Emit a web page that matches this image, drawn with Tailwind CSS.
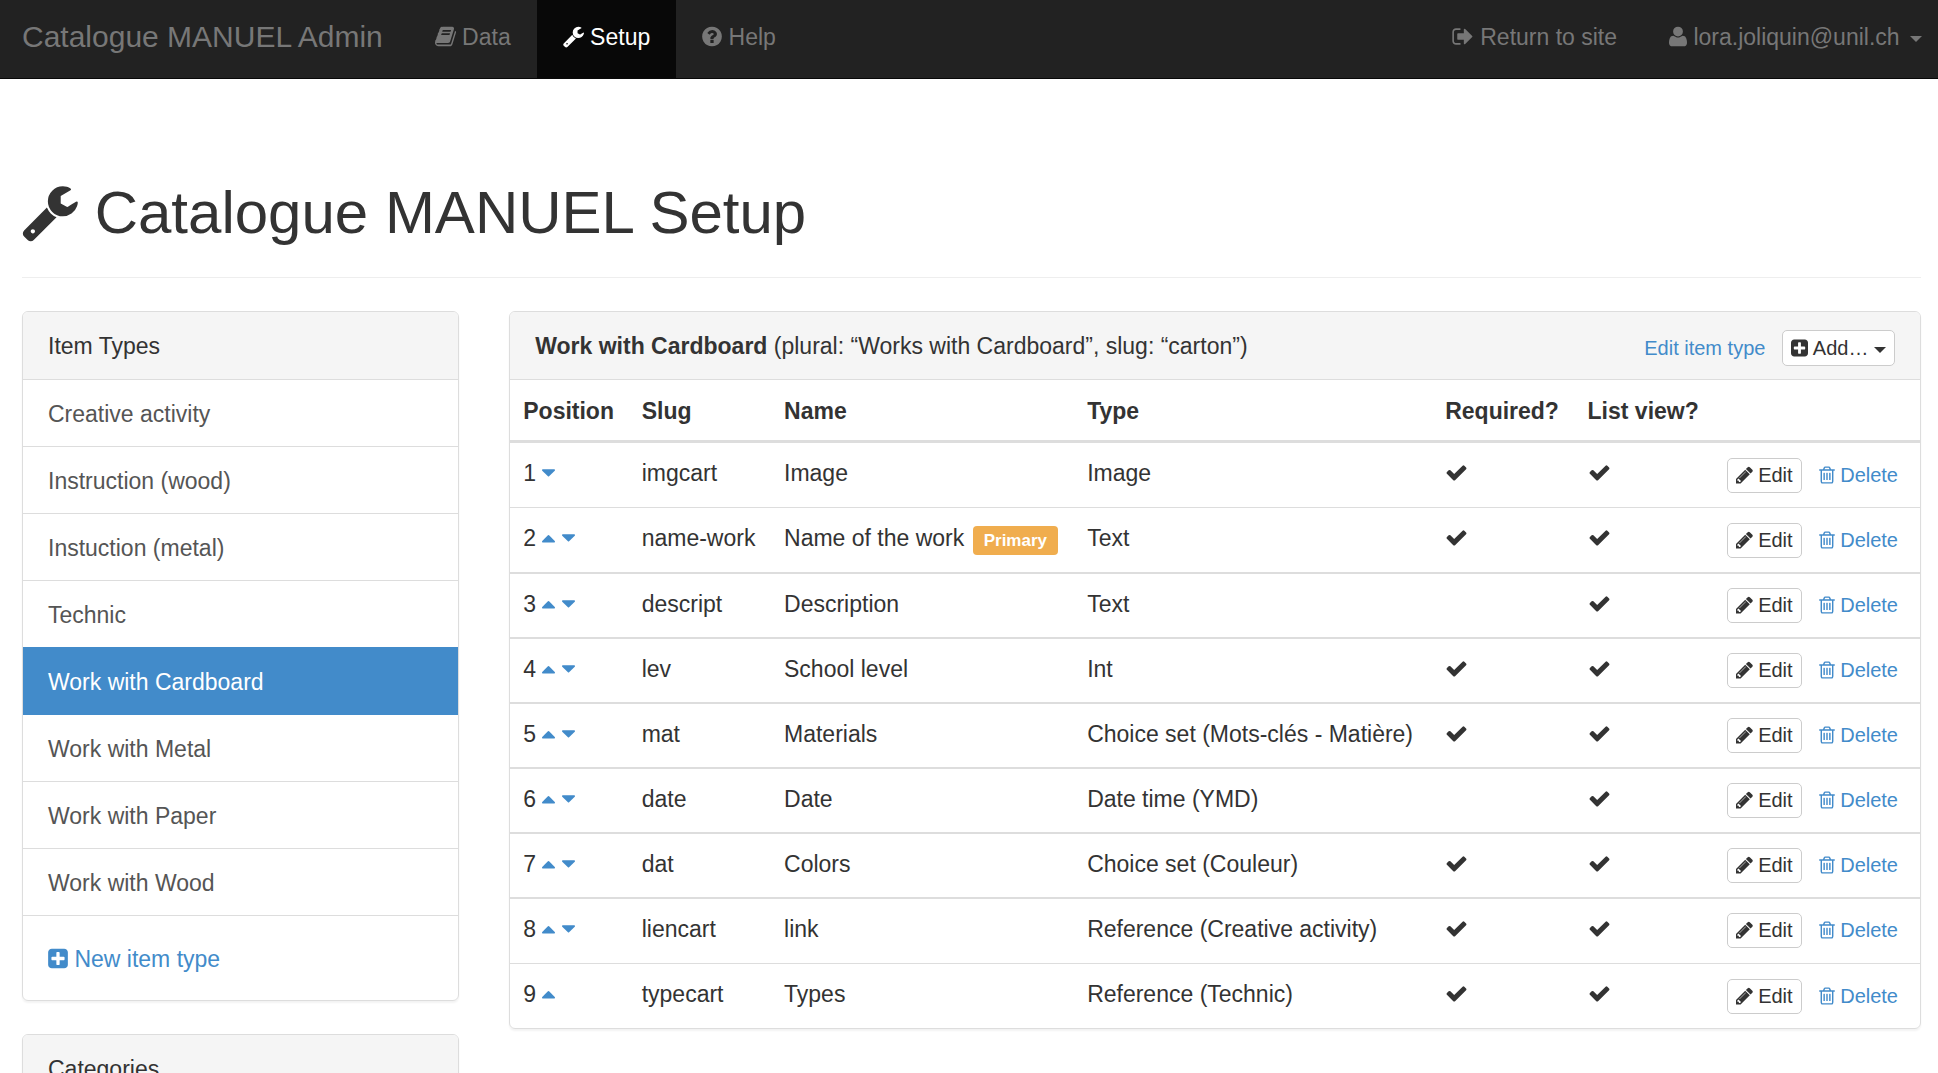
<!DOCTYPE html>
<html lang="en">
<head>
<meta charset="utf-8">
<meta name="viewport" content="width=device-width, initial-scale=1">
<title>Catalogue MANUEL Setup</title>
<script src="https://cdn.jsdelivr.net/npm/@tailwindcss/browser@4"></script>
</head>
<body class="bg-white font-['Liberation_Sans',Arial,sans-serif] text-[23px] leading-[33px] text-[#333]">

<!-- Icon set -->
<svg class="hidden" aria-hidden="true">
  <symbol id="wrench" viewBox="64 0 1664 1792"><path d="M448 1472q0-26-19-45t-45-19-45 19-19 45 19 45 45 19 45-19 19-45zm644-420l-682 682q-37 37-90 37-52 0-91-37l-106-108q-38-36-38-90 0-53 38-91l681-681q39 98 114.5 173.5t173.5 114.5zm634-435q0 39-23 106-47 134-164.5 217.5t-258.5 83.5q-185 0-316.5-131.5t-131.5-316.5 131.5-316.5 316.5-131.5q58 0 121.5 16.5t107.5 46.5q16 11 16 28t-16 28l-293 169v224l193 107q5-3 79-48.5t135.5-81 70.5-35.5q15 0 23.5 10t8.5 25z"/></symbol>
  <symbol id="book" viewBox="64 0 1664 1792"><path d="M1703 478q40 57 18 129l-275 906q-19 64-76.5 107.5t-122.5 43.5h-923q-77 0-148.5-53.5t-99.5-131.5q-24-67-2-127 0-4 3-27t4-37q1-8-3-21.5t-3-19.5q2-11 8-21t16.5-23.5 16.5-23.5q23-38 45-91.5t30-91.5q3-10 .5-30t-.5-28q3-11 17-28t17-23q21-36 42-92t25-90q1-9-2.5-32t.5-28q4-13 22-30.5t22-22.5q19-26 42.5-84.5t27.5-96.5q1-8-3-25.5t-2-26.5q2-8 9-18t18-23 17-21q8-12 16.5-30.5t15-35 16-36 19.5-32 26.5-23.5 36-11.5 47.5 5.5l-1 3q38-9 51-9h761q74 0 114 56t18 130l-274 906q-36 119-71.5 153.5t-128.5 34.5h-869q-27 0-38 15-11 16-1 43 24 70 144 70h923q29 0 56-15.5t35-41.5l300-987q7-22 5-57 38 15 59 43zm-1064 2q-4 13 2 22.5t20 9.5h608q13 0 25.5-9.5t16.5-22.5l21-64q4-13-2-22.5t-20-9.5h-608q-13 0-25.5 9.5t-16.5 22.5zm-83 256q-4 13 2 22.5t20 9.5h608q13 0 25.5-9.5t16.5-22.5l21-64q4-13-2-22.5t-20-9.5h-608q-13 0-25.5 9.5t-16.5 22.5z"/></symbol>
  <symbol id="question" viewBox="128 0 1536 1792"><path d="M1024 1376v-192q0-14-9-23t-23-9h-192q-14 0-23 9t-9 23v192q0 14 9 23t23 9h192q14 0 23-9t9-23zm256-672q0-88-55.5-163t-138.5-116-170-41q-243 0-371 213-15 24 8 42l132 100q7 6 19 6 16 0 25-12 53-68 86-92 34-24 86-24 48 0 85.5 26t37.5 59q0 38-20 61t-68 45q-63 28-115.5 86.5t-52.5 125.5v36q0 14 9 23t23 9h192q14 0 23-9t9-23q0-19 21.5-49.5t54.5-49.5q32-18 49-28.5t46-35 44.5-48 28-60.5 12.5-81zm384 192q0 209-103 385.5t-279.5 279.5-385.5 103-385.5-103-279.5-279.5-103-385.5 103-385.5 279.5-279.5 385.5-103 385.5 103 279.5 279.5 103 385.5z"/></symbol>
  <symbol id="sign-out" viewBox="64 0 1664 1792"><path d="M704 1440q0 4 1 20t.5 26.5-3 23.5-10 19.5-20.5 6.5h-320q-119 0-203.5-84.5t-84.5-203.5v-704q0-119 84.5-203.5t203.5-84.5h320q13 0 22.5 9.5t9.5 22.5q0 4 1 20t.5 26.5-3 23.5-10 19.5-20.5 6.5h-320q-66 0-113 47t-47 113v704q0 66 47 113t113 47h312l11.5 1 11.5 3 8 5.5 7 9 2 13.5zm928-544q0 26-19 45l-544 544q-19 19-45 19t-45-19-19-45v-288h-448q-26 0-45-19t-19-45v-384q0-26 19-45t45-19h448v-288q0-26 19-45t45-19 45 19l544 544q19 19 19 45z"/></symbol>
  <symbol id="user" viewBox="192 0 1408 1792"><path d="M1600 1405q0 120-73 189.5t-194 69.5h-874q-121 0-194-69.5t-73-189.5q0-53 3.5-103.5t14-109 26.5-108.5 43-97.5 62-81 85.5-53.5 111.5-20q9 0 42 21.5t74.5 48 108 48 133.5 21.5 133.5-21.5 108-48 74.5-48 42-21.5q61 0 111.5 20t85.5 53.5 62 81 43 97.5 26.5 108.5 14 109 3.5 103.5zm-320-893q0 159-112.5 271.5t-271.5 112.5-271.5-112.5-112.5-271.5 112.5-271.5 271.5-112.5 271.5 112.5 112.5 271.5z"/></symbol>
  <symbol id="plus" viewBox="128 0 1536 1792"><path d="M1408 960v-128q0-26-19-45t-45-19h-320v-320q0-26-19-45t-45-19h-128q-26 0-45 19t-19 45v320h-320q-26 0-45 19t-19 45v128q0 26 19 45t45 19h320v320q0 26 19 45t45 19h128q26 0 45-19t19-45v-320h320q26 0 45-19t19-45zm256-544v960q0 119-84.5 203.5t-203.5 84.5h-960q-119 0-203.5-84.5t-84.5-203.5v-960q0-119 84.5-203.5t203.5-84.5h960q119 0 203.5 84.5t84.5 203.5z"/></symbol>
  <symbol id="check" viewBox="0 0 1792 1792"><path d="M1671 566q0 40-28 68l-724 724-136 136q-28 28-68 28t-68-28l-136-136-362-362q-28-28-28-68t28-68l136-136q28-28 68-28t68 28l294 295 656-657q28-28 68-28t68 28l136 136q28 28 28 68z"/></symbol>
  <symbol id="pencil" viewBox="128 0 1536 1792"><path d="M491 1536l91-91-235-235-91 91v107h128v128h107zm523-928q0-22-22-22-10 0-17 7l-542 542q-7 7-7 17 0 22 22 22 10 0 17-7l542-542q7-7 7-17zm-54-192l416 416-832 832h-416v-416zm683 96q0 53-37 90l-166 166-416-416 166-165q36-38 90-38 53 0 91 38l235 234q37 39 37 91z"/></symbol>
  <symbol id="trash" viewBox="192 0 1408 1792"><path d="M704 736v576q0 14-9 23t-23 9h-64q-14 0-23-9t-9-23v-576q0-14 9-23t23-9h64q14 0 23 9t9 23zm256 0v576q0 14-9 23t-23 9h-64q-14 0-23-9t-9-23v-576q0-14 9-23t23-9h64q14 0 23 9t9 23zm256 0v576q0 14-9 23t-23 9h-64q-14 0-23-9t-9-23v-576q0-14 9-23t23-9h64q14 0 23 9t9 23zm128 724v-948h-896v948q0 22 7 40.5t14.5 27 10.5 8.5h832q3 0 10.5-8.5t14.5-27 7-40.5zm-672-1076h448l-48-117q-7-9-17-11h-317q-10 2-17 11zm928 32v64q0 14-9 23t-23 9h-96v948q0 83-47 143.5t-113 60.5h-832q-66 0-113-58.5t-47-141.5v-952h-96q-14 0-23-9t-9-23v-64q0-14 9-23t23-9h309l70-167q15-37 54-63t79-26h320q40 0 79 26t54 63l70 167h309q14 0 23 9t9 23z"/></symbol>
  <symbol id="down" viewBox="384 0 1024 1792"><path d="M1408 704q0 26-19 45l-448 448q-19 19-45 19t-45-19l-448-448q-19-19-19-45t19-45 45-19h896q26 0 45 19t19 45z"/></symbol>
  <symbol id="up" viewBox="384 0 1024 1792"><path d="M1408 1216q0 26-19 45t-45 19h-896q-26 0-45-19t-19-45 19-45l448-448q19-19 45-19t45 19l448 448q19 19 19 45z"/></symbol>
  <symbol id="caret" viewBox="0 0 12 6"><path d="M0 0h12l-6 6z"/></symbol>
</svg>

<nav class="flex justify-between whitespace-nowrap border-b border-[#080808] bg-[#222] pr-4 pl-[22px] text-[#777] [&_svg]:inline [&_svg]:fill-current">
  <div class="flex">
    <a href="#" class="pt-5 pr-[26px] pb-[25px] text-[30px]">Catalogue MANUEL Admin</a>
    <a href="#" class="px-[26px] pt-[21px] pb-6"><svg class="h-[23px] w-[21px] align-[-3px]"><use href="#book"/></svg> Data</a>
    <a href="#" class="bg-[#080808] px-[26px] pt-[21px] pb-6 text-white"><svg class="h-[23px] w-[21px] align-[-3px]"><use href="#wrench"/></svg> Setup</a>
    <a href="#" class="px-[26px] pt-[21px] pb-6"><svg class="h-[23px] w-[20px] align-[-3px]"><use href="#question"/></svg> Help</a>
  </div>
  <div class="flex">
    <a href="#" class="px-[26px] pt-[21px] pb-6"><svg class="h-[23px] w-[22px] align-[-3px]"><use href="#sign-out"/></svg> Return to site</a>
    <a href="#" class="pt-[21px] pb-6 pl-[26px]"><svg class="h-[23px] w-[18px] align-[-3px]"><use href="#user"/></svg> lora.joliquin@unil.ch <svg class="ml-1 h-[6px] w-[12px] align-[3px]"><use href="#caret"/></svg></a>
  </div>
</nav>

<main class="pt-[101px] pr-[17px] pl-[22px]">
  <h1 class="mb-[33px] border-b border-[#eee] pb-[31px] text-[60px] leading-[66px]"><svg class="inline h-[60px] w-[56px] fill-current align-[-9px]"><use href="#wrench"/></svg> Catalogue MANUEL Setup</h1>

  <div class="grid grid-cols-12 items-start gap-x-[50px]">
    <aside class="col-span-3 flex flex-col gap-[33px]">
      <section class="rounded-md border border-[#ddd] shadow-[0_2px_2px_rgba(0,0,0,0.05)]">
        <h2 class="rounded-t-[5px] border-b border-[#ddd] bg-[#f5f5f5] px-[25px] pt-[18px] pb-4">Item Types</h2>
        <nav class="flex flex-col text-[#555]">
          <a href="#" class="border-b border-[#ddd] px-[25px] pt-[17px] pb-[15px] leading-[34px]">Creative activity</a>
          <a href="#" class="border-b border-[#ddd] px-[25px] pt-[17px] pb-[15px] leading-[34px]">Instruction (wood)</a>
          <a href="#" class="border-b border-[#ddd] px-[25px] pt-[17px] pb-[15px] leading-[34px]">Instuction (metal)</a>
          <a href="#" class="border-b border-[#428bca] px-[25px] pt-[17px] pb-[15px] leading-[34px]">Technic</a>
          <a href="#" class="border-b border-[#428bca] bg-[#428bca] px-[25px] pt-[17px] pb-[15px] leading-[34px] text-white">Work with Cardboard</a>
          <a href="#" class="border-b border-[#ddd] px-[25px] pt-[17px] pb-[15px] leading-[34px]">Work with Metal</a>
          <a href="#" class="border-b border-[#ddd] px-[25px] pt-[17px] pb-[15px] leading-[34px]">Work with Paper</a>
          <a href="#" class="border-b border-[#ddd] px-[25px] pt-[17px] pb-[15px] leading-[34px]">Work with Wood</a>
        </nav>
        <div class="px-[25px] pt-[26px] pb-6 leading-[34px]"><a href="#" class="text-[#428bca]"><svg class="inline h-[23px] w-[20px] fill-current align-[-3px]"><use href="#plus"/></svg> New item type</a></div>
      </section>
      <section class="rounded-md border border-[#ddd] shadow-[0_2px_2px_rgba(0,0,0,0.05)]">
        <h2 class="rounded-t-[5px] bg-[#f5f5f5] px-[25px] pt-[18px] pb-4">Categories</h2>
      </section>
    </aside>

    <section class="col-span-9 rounded-md border border-[#ddd] shadow-[0_2px_2px_rgba(0,0,0,0.05)]">
      <header class="flex items-start justify-between rounded-t-[5px] border-b border-[#ddd] bg-[#f5f5f5] px-[25px]">
        <h2 class="pt-[18px] pb-4"><strong>Work with Cardboard</strong> (plural: “Works with Cardboard”, slug: “carton”)</h2>
        <div class="flex gap-2 pt-[18px] text-[20px] leading-[30px]">
          <a href="#" class="border border-transparent px-2 py-[2px] text-[#428bca]">Edit item type</a>
          <button type="button" class="rounded-[5px] border border-[#ccc] bg-white px-2 py-[2px]"><svg class="inline h-[20px] w-[17px] fill-current align-[-3px]"><use href="#plus"/></svg> Add… <svg class="inline h-[6px] w-[12px] fill-current align-[2px]"><use href="#caret"/></svg></button>
        </div>
      </header>

      <table class="w-full table-fixed border-separate border-spacing-0 whitespace-nowrap text-left [&_svg]:inline [&_svg]:fill-current [&_td]:h-[65px] [&_td]:border-[#ddd] [&_td]:px-[13px] [&_td]:pt-[14px] [&_td]:align-top [&_th]:h-[63px] [&_th]:border-b-3 [&_th]:border-[#ddd] [&_th]:px-[13px] [&_th]:pt-[15px] [&_th]:align-top">
        <thead>
          <tr>
            <th scope="col" class="w-[8.4%]">Position</th>
            <th scope="col" class="w-[10.1%]">Slug</th>
            <th scope="col" class="w-[21.5%]">Name</th>
            <th scope="col" class="w-[25.4%]">Type</th>
            <th scope="col" class="w-[10.1%]">Required?</th>
            <th scope="col" class="w-[9.9%]">List view?</th>
            <th scope="col" aria-label="Actions"></th>
          </tr>
        </thead>
        <tbody>
          <tr class="[&>td]:h-[64px]!">
            <td>1 <a href="#" aria-label="Move down" class="text-[#428bca]"><svg class="h-[23px] w-[13px] align-[-3px]"><use href="#down"/></svg></a></td>
            <td>imgcart</td><td>Image</td><td>Image</td>
            <td><svg class="size-[23px] align-[-3px]" role="img" aria-label="Yes"><use href="#check"/></svg></td>
            <td><svg class="size-[23px] align-[-3px]" role="img" aria-label="Yes"><use href="#check"/></svg></td>
            <td><div class="mt-px flex justify-end gap-2 text-[20px] leading-[29px]"><button type="button" class="rounded-[5px] border border-[#ccc] bg-white px-2 py-[2px]"><svg class="h-[20px] w-[17px] align-[-3px]"><use href="#pencil"/></svg> Edit</button><a href="#" class="border border-transparent px-2 py-[2px] text-[#428bca]"><svg class="h-[20px] w-[16px] align-[-3px]"><use href="#trash"/></svg> Delete</a></div></td>
          </tr>
          <tr class="[&>td]:border-t">
            <td>2 <a href="#" aria-label="Move up" class="text-[#428bca]"><svg class="h-[23px] w-[13px] align-[-3px]"><use href="#up"/></svg></a> <a href="#" aria-label="Move down" class="text-[#428bca]"><svg class="h-[23px] w-[13px] align-[-3px]"><use href="#down"/></svg></a></td>
            <td>name-work</td><td>Name of the work <span class="ml-[2px] inline-block rounded-[4px] bg-[#f0ad4e] px-[11px] text-[17px] leading-[29px] font-bold text-white">Primary</span></td><td>Text</td>
            <td><svg class="size-[23px] align-[-3px]" role="img" aria-label="Yes"><use href="#check"/></svg></td>
            <td><svg class="size-[23px] align-[-3px]" role="img" aria-label="Yes"><use href="#check"/></svg></td>
            <td><div class="mt-px flex justify-end gap-2 text-[20px] leading-[29px]"><button type="button" class="rounded-[5px] border border-[#ccc] bg-white px-2 py-[2px]"><svg class="h-[20px] w-[17px] align-[-3px]"><use href="#pencil"/></svg> Edit</button><a href="#" class="border border-transparent px-2 py-[2px] text-[#428bca]"><svg class="h-[20px] w-[16px] align-[-3px]"><use href="#trash"/></svg> Delete</a></div></td>
          </tr>
          <tr class="[&>td]:border-t-2">
            <td>3 <a href="#" aria-label="Move up" class="text-[#428bca]"><svg class="h-[23px] w-[13px] align-[-3px]"><use href="#up"/></svg></a> <a href="#" aria-label="Move down" class="text-[#428bca]"><svg class="h-[23px] w-[13px] align-[-3px]"><use href="#down"/></svg></a></td>
            <td>descript</td><td>Description</td><td>Text</td>
            <td></td>
            <td><svg class="size-[23px] align-[-3px]" role="img" aria-label="Yes"><use href="#check"/></svg></td>
            <td><div class="flex justify-end gap-2 text-[20px] leading-[29px]"><button type="button" class="rounded-[5px] border border-[#ccc] bg-white px-2 py-[2px]"><svg class="h-[20px] w-[17px] align-[-3px]"><use href="#pencil"/></svg> Edit</button><a href="#" class="border border-transparent px-2 py-[2px] text-[#428bca]"><svg class="h-[20px] w-[16px] align-[-3px]"><use href="#trash"/></svg> Delete</a></div></td>
          </tr>
          <tr class="[&>td]:border-t-2">
            <td>4 <a href="#" aria-label="Move up" class="text-[#428bca]"><svg class="h-[23px] w-[13px] align-[-3px]"><use href="#up"/></svg></a> <a href="#" aria-label="Move down" class="text-[#428bca]"><svg class="h-[23px] w-[13px] align-[-3px]"><use href="#down"/></svg></a></td>
            <td>lev</td><td>School level</td><td>Int</td>
            <td><svg class="size-[23px] align-[-3px]" role="img" aria-label="Yes"><use href="#check"/></svg></td>
            <td><svg class="size-[23px] align-[-3px]" role="img" aria-label="Yes"><use href="#check"/></svg></td>
            <td><div class="flex justify-end gap-2 text-[20px] leading-[29px]"><button type="button" class="rounded-[5px] border border-[#ccc] bg-white px-2 py-[2px]"><svg class="h-[20px] w-[17px] align-[-3px]"><use href="#pencil"/></svg> Edit</button><a href="#" class="border border-transparent px-2 py-[2px] text-[#428bca]"><svg class="h-[20px] w-[16px] align-[-3px]"><use href="#trash"/></svg> Delete</a></div></td>
          </tr>
          <tr class="[&>td]:border-t-2">
            <td>5 <a href="#" aria-label="Move up" class="text-[#428bca]"><svg class="h-[23px] w-[13px] align-[-3px]"><use href="#up"/></svg></a> <a href="#" aria-label="Move down" class="text-[#428bca]"><svg class="h-[23px] w-[13px] align-[-3px]"><use href="#down"/></svg></a></td>
            <td>mat</td><td>Materials</td><td>Choice set (Mots-clés - Matière)</td>
            <td><svg class="size-[23px] align-[-3px]" role="img" aria-label="Yes"><use href="#check"/></svg></td>
            <td><svg class="size-[23px] align-[-3px]" role="img" aria-label="Yes"><use href="#check"/></svg></td>
            <td><div class="flex justify-end gap-2 text-[20px] leading-[29px]"><button type="button" class="rounded-[5px] border border-[#ccc] bg-white px-2 py-[2px]"><svg class="h-[20px] w-[17px] align-[-3px]"><use href="#pencil"/></svg> Edit</button><a href="#" class="border border-transparent px-2 py-[2px] text-[#428bca]"><svg class="h-[20px] w-[16px] align-[-3px]"><use href="#trash"/></svg> Delete</a></div></td>
          </tr>
          <tr class="[&>td]:border-t-2">
            <td>6 <a href="#" aria-label="Move up" class="text-[#428bca]"><svg class="h-[23px] w-[13px] align-[-3px]"><use href="#up"/></svg></a> <a href="#" aria-label="Move down" class="text-[#428bca]"><svg class="h-[23px] w-[13px] align-[-3px]"><use href="#down"/></svg></a></td>
            <td>date</td><td>Date</td><td>Date time (YMD)</td>
            <td></td>
            <td><svg class="size-[23px] align-[-3px]" role="img" aria-label="Yes"><use href="#check"/></svg></td>
            <td><div class="flex justify-end gap-2 text-[20px] leading-[29px]"><button type="button" class="rounded-[5px] border border-[#ccc] bg-white px-2 py-[2px]"><svg class="h-[20px] w-[17px] align-[-3px]"><use href="#pencil"/></svg> Edit</button><a href="#" class="border border-transparent px-2 py-[2px] text-[#428bca]"><svg class="h-[20px] w-[16px] align-[-3px]"><use href="#trash"/></svg> Delete</a></div></td>
          </tr>
          <tr class="[&>td]:border-t-2">
            <td>7 <a href="#" aria-label="Move up" class="text-[#428bca]"><svg class="h-[23px] w-[13px] align-[-3px]"><use href="#up"/></svg></a> <a href="#" aria-label="Move down" class="text-[#428bca]"><svg class="h-[23px] w-[13px] align-[-3px]"><use href="#down"/></svg></a></td>
            <td>dat</td><td>Colors</td><td>Choice set (Couleur)</td>
            <td><svg class="size-[23px] align-[-3px]" role="img" aria-label="Yes"><use href="#check"/></svg></td>
            <td><svg class="size-[23px] align-[-3px]" role="img" aria-label="Yes"><use href="#check"/></svg></td>
            <td><div class="flex justify-end gap-2 text-[20px] leading-[29px]"><button type="button" class="rounded-[5px] border border-[#ccc] bg-white px-2 py-[2px]"><svg class="h-[20px] w-[17px] align-[-3px]"><use href="#pencil"/></svg> Edit</button><a href="#" class="border border-transparent px-2 py-[2px] text-[#428bca]"><svg class="h-[20px] w-[16px] align-[-3px]"><use href="#trash"/></svg> Delete</a></div></td>
          </tr>
          <tr class="[&>td]:h-[66px]! [&>td]:border-t-2">
            <td>8 <a href="#" aria-label="Move up" class="text-[#428bca]"><svg class="h-[23px] w-[13px] align-[-3px]"><use href="#up"/></svg></a> <a href="#" aria-label="Move down" class="text-[#428bca]"><svg class="h-[23px] w-[13px] align-[-3px]"><use href="#down"/></svg></a></td>
            <td>liencart</td><td>link</td><td>Reference (Creative activity)</td>
            <td><svg class="size-[23px] align-[-3px]" role="img" aria-label="Yes"><use href="#check"/></svg></td>
            <td><svg class="size-[23px] align-[-3px]" role="img" aria-label="Yes"><use href="#check"/></svg></td>
            <td><div class="flex justify-end gap-2 text-[20px] leading-[29px]"><button type="button" class="rounded-[5px] border border-[#ccc] bg-white px-2 py-[2px]"><svg class="h-[20px] w-[17px] align-[-3px]"><use href="#pencil"/></svg> Edit</button><a href="#" class="border border-transparent px-2 py-[2px] text-[#428bca]"><svg class="h-[20px] w-[16px] align-[-3px]"><use href="#trash"/></svg> Delete</a></div></td>
          </tr>
          <tr class="[&>td]:border-t">
            <td>9 <a href="#" aria-label="Move up" class="text-[#428bca]"><svg class="h-[23px] w-[13px] align-[-3px]"><use href="#up"/></svg></a></td>
            <td>typecart</td><td>Types</td><td>Reference (Technic)</td>
            <td><svg class="size-[23px] align-[-3px]" role="img" aria-label="Yes"><use href="#check"/></svg></td>
            <td><svg class="size-[23px] align-[-3px]" role="img" aria-label="Yes"><use href="#check"/></svg></td>
            <td><div class="mt-px flex justify-end gap-2 text-[20px] leading-[29px]"><button type="button" class="rounded-[5px] border border-[#ccc] bg-white px-2 py-[2px]"><svg class="h-[20px] w-[17px] align-[-3px]"><use href="#pencil"/></svg> Edit</button><a href="#" class="border border-transparent px-2 py-[2px] text-[#428bca]"><svg class="h-[20px] w-[16px] align-[-3px]"><use href="#trash"/></svg> Delete</a></div></td>
          </tr>
        </tbody>
      </table>
    </section>
  </div>
</main>
</body>
</html>
